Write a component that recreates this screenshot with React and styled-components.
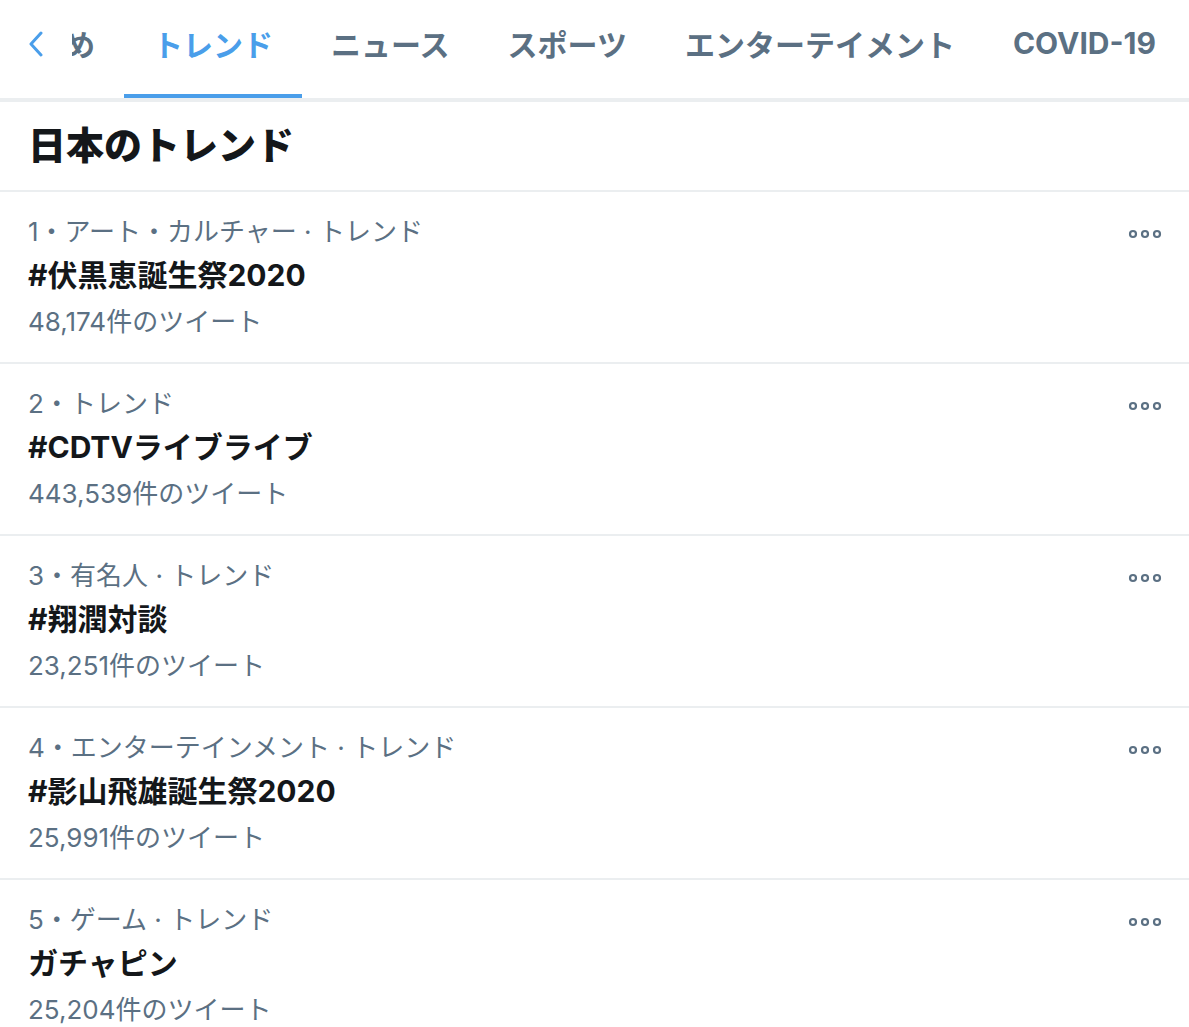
import React from "react";
import styled, { createGlobalStyle } from "styled-components";

const GlobalStyle = createGlobalStyle`
  html, body {
    margin: 0;
    padding: 0;
    background: #ffffff;
  }
  body {
    font-family: Inter, "Noto Sans CJK JP", sans-serif;
    color: #14171a;
    -webkit-font-smoothing: antialiased;
  }
  * { box-sizing: border-box; }
`;

const Page = styled.div`
  width: 1189px;
  height: 1027px;
  overflow: hidden;
  background: #fff;
  position: relative;
`;

const TabBar = styled.nav`
  position: relative;
  height: 102px;
  border-bottom: 4px solid #ebeef0;
  overflow: hidden;
`;

const TabTrack = styled.div`
  display: flex;
  margin-left: -54px;
  white-space: nowrap;
`;

const Tab = styled.div`
  position: relative;
  flex: 0 0 auto;
  height: 98px;
  padding: 0 29px 12px;
  display: flex;
  align-items: center;
  font-size: 30px;
  font-weight: 700;
  color: ${(p) => (p.$active ? "#4a9eea" : "#5b7083")};

  &::after {
    content: "";
    position: absolute;
    left: 0;
    right: 0;
    bottom: 0;
    height: 4px;
    background: ${(p) => (p.$active ? "#4a9eea" : "transparent")};
  }
`;

const ScrollButton = styled.div`
  position: absolute;
  left: 0;
  top: 0;
  width: 72px;
  height: 94px;
  background: #fff;
  display: flex;
  align-items: flex-start;
  padding: 31px 0 0 28px;
`;

const Header = styled.div`
  height: 90px;
  padding: 0 28px 7px;
  display: flex;
  align-items: center;
  border-bottom: 2px solid #ebeef0;
`;

const Title = styled.h2`
  margin: 0;
  font-size: 38px;
  font-weight: 800;
  color: #14171a;
`;

const Row = styled.div`
  display: flex;
  align-items: flex-start;
  padding: 21px 27px 19px 28px;
  border-bottom: 2px solid #ebeef0;
`;

const Body = styled.div`
  flex: 1;
  display: flex;
  flex-direction: column;
`;

const Meta = styled.div`
  font-size: 26px;
  line-height: 38px;
  height: 38px;
  color: #5b7083;
`;

const Name = styled.div`
  font-size: 30px;
  line-height: 48px;
  height: 48px;
  font-weight: 700;
  color: #14171a;
`;

const Count = styled.div`
  font-size: 26px;
  line-height: 46px;
  height: 44px;
  color: #5b7083;
`;

const More = styled.div`
  margin-top: 16px;
  width: 34px;
  height: 10px;
  display: flex;
`;

const tabs = ["おすすめ", "トレンド", "ニュース", "スポーツ", "エンターテイメント", "COVID-19"];

const trends = [
  { rank: 1, category: "アート・カルチャー", name: "#伏黒恵誕生祭2020", count: "48,174" },
  { rank: 2, category: null, name: "#CDTVライブライブ", count: "443,539" },
  { rank: 3, category: "有名人", name: "#翔潤対談", count: "23,251" },
  { rank: 4, category: "エンターテインメント", name: "#影山飛雄誕生祭2020", count: "25,991" },
  { rank: 5, category: "ゲーム", name: "ガチャピン", count: "25,204" },
];

const Chevron = () => (
  <svg width="16" height="26" viewBox="0 0 16 26" fill="none">
    <path d="M13 2 L3 13 L13 24" stroke="#4a9eea" strokeWidth="3" strokeLinecap="round" strokeLinejoin="round" />
  </svg>
);

const MoreIcon = () => (
  <svg width="34" height="10" viewBox="0 0 34 10" fill="none">
    {[5, 17, 29].map((cx) => (
      <circle key={cx} cx={cx} cy="5" r="3" stroke="#5b7083" strokeWidth="2.2" />
    ))}
  </svg>
);

export default function App() {
  return (
    <>
      <GlobalStyle />
      <Page>
        <TabBar>
          <TabTrack>
            {tabs.map((t) => (
              <Tab key={t} $active={t === "トレンド"}>
                {t}
              </Tab>
            ))}
          </TabTrack>
          <ScrollButton>
            <Chevron />
          </ScrollButton>
        </TabBar>
        <Header>
          <Title>日本のトレンド</Title>
        </Header>
        {trends.map((t) => (
          <Row key={t.rank}>
            <Body>
              <Meta>
                {t.rank}・{t.category ? `${t.category} · ` : ""}トレンド
              </Meta>
              <Name>{t.name}</Name>
              <Count>{t.count}件のツイート</Count>
            </Body>
            <More>
              <MoreIcon />
            </More>
          </Row>
        ))}
      </Page>
    </>
  );
}
